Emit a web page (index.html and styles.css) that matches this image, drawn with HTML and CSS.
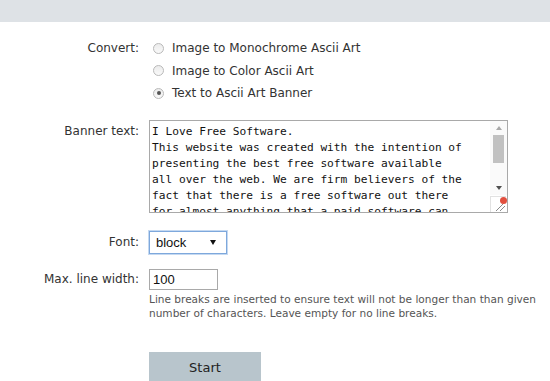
FILE: index.html
```html
<!DOCTYPE html>
<html>
<head>
<meta charset="utf-8">
<link rel="stylesheet" href="styles.css">
</head>
<body>
<div class="topbar"></div>
<form class="form">
  <div class="row row-convert">
    <div class="label">Convert:</div>
    <div class="control radios">
      <label class="radio"><input type="radio" name="mode"><span>Image to Monochrome Ascii Art</span></label>
      <label class="radio"><input type="radio" name="mode"><span>Image to Color Ascii Art</span></label>
      <label class="radio"><input type="radio" name="mode" checked><span>Text to Ascii Art Banner</span></label>
    </div>
  </div>
  <div class="row row-text">
    <div class="label label-text">Banner text:</div>
    <div class="control textwrap">
      <textarea class="banner" spellcheck="false">I Love Free Software.
This website was created with the intention of
presenting the best free software available
all over the web. We are firm believers of the
fact that there is a free software out there
for almost anything that a paid software can
do. So enjoy the free software and share it.</textarea>
      <div class="vscroll">
        <span class="sb-btn sb-up"></span>
        <span class="sb-thumb"></span>
        <span class="sb-space"></span>
        <span class="sb-btn sb-down"></span>
      </div>
      <div class="corner">
        <svg width="15" height="15" viewBox="0 0 15 15"><path d="M5 14 L14 5 M9 14 L14 9" stroke="#8a8a8a" stroke-width="1" fill="none"/></svg>
      </div>
      <span class="dot"></span>
    </div>
  </div>
  <div class="row row-font">
    <div class="label label-font">Font:</div>
    <div class="control">
      <div class="select"><span>block</span><span class="arrow"></span></div>
    </div>
  </div>
  <div class="row row-width">
    <div class="label label-width">Max. line width:</div>
    <div class="control">
      <input class="num" type="text" value="100">
      <p class="help">Line breaks are inserted to ensure text will not be longer than than given number of characters. Leave empty for no line breaks.</p>
    </div>
  </div>
  <div class="row row-start">
    <div class="label"></div>
    <div class="control">
      <button type="button" class="start">Start</button>
    </div>
  </div>
</form>
</body>
</html>
```

FILE: styles.css
```css
html, body {
  margin: 0;
  padding: 0;
  background: #fff;
}
body {
  font-family: "DejaVu Sans", Verdana, sans-serif;
  font-size: 12px;
  color: #333;
  overflow: hidden;
}
.topbar {
  height: 22px;
  background: #dee2e6;
}
.form {
  margin: 0;
  padding-top: 15px;
}
.row {
  display: flex;
  align-items: flex-start;
}
.label {
  flex: none;
  text-align: right;
  padding-right: 10px;
  box-sizing: border-box;
  width: 149px;
  line-height: 22px;
  color: #333;
}
.control {
  flex: 1;
  min-width: 0;
}
.radios {
  display: flex;
  flex-direction: column;
}
.radio {
  display: flex;
  align-items: center;
  height: 22.5px;
  margin-left: 4px;
}
.radio input {
  -webkit-appearance: none;
  appearance: none;
  width: 11px;
  height: 11px;
  margin: 0 8px 0 0;
  border-radius: 50%;
  border: 1px solid #b9b9b9;
  background: linear-gradient(#ececec, #f9f9f9);
  box-sizing: border-box;
  position: relative;
}
.radio input:checked::after {
  content: "";
  position: absolute;
  left: 2.5px;
  top: 2.5px;
  width: 4px;
  height: 4px;
  border-radius: 50%;
  background: #555;
}
.row-text {
  margin-top: 15px;
}
.label-text {
  line-height: 20px;
  padding-top: 1px;
}
.textwrap {
  position: relative;
}
.banner {
  display: block;
  width: 359px;
  height: 93px;
  box-sizing: border-box;
  margin: 0;
  border: 1px solid #a9a9a9;
  padding: 3px 18px 0 2px;
  font-family: "DejaVu Sans Mono", "Liberation Mono", monospace;
  font-size: 11.2px;
  line-height: 16px;
  color: #111;
  resize: none;
  overflow: hidden;
  white-space: pre;
}
.vscroll {
  position: absolute;
  left: 341px;
  top: 1px;
  width: 17px;
  height: 74px;
  background: #fafafa;
  display: flex;
  flex-direction: column;
  align-items: center;
}
.sb-btn {
  flex: none;
  width: 17px;
  height: 14px;
  display: flex;
  align-items: center;
  justify-content: center;
}
.sb-up::before {
  content: "";
  border-left: 3px solid transparent;
  border-right: 3px solid transparent;
  border-bottom: 4px solid #a8a8a8;
}
.sb-down::before {
  content: "";
  border-left: 3px solid transparent;
  border-right: 3px solid transparent;
  border-top: 4px solid #505050;
}
.sb-thumb {
  flex: none;
  width: 11px;
  height: 28px;
  background: #c1c1c1;
}
.sb-space {
  flex: 1;
}
.corner {
  position: absolute;
  left: 341px;
  top: 76px;
  width: 16px;
  height: 16px;
  box-sizing: border-box;
  border-top: 1px solid #e2e2e2;
  border-left: 1px solid #e2e2e2;
  background: #fff;
}
.corner svg {
  display: block;
}
.dot {
  position: absolute;
  left: 351px;
  top: 77px;
  width: 7px;
  height: 7px;
  border-radius: 50%;
  background: #e2503f;
}
.row-font {
  margin-top: 18px;
}
.label-font {
  line-height: 23px;
}
.select {
  width: 78px;
  height: 23px;
  box-sizing: border-box;
  border: 1px solid #7ea8dc;
  box-shadow: 0 0 0 1px #c5d9f1;
  display: flex;
  align-items: center;
  justify-content: space-between;
  padding: 0 10px 0 6px;
  font-family: "Liberation Sans", Arial, sans-serif;
  font-size: 13px;
  color: #111;
  background: #fff;
}
.arrow {
  width: 0;
  height: 0;
  border-left: 3.5px solid transparent;
  border-right: 3.5px solid transparent;
  border-top: 5px solid #111;
}
.row-width {
  margin-top: 15px;
}
.label-width {
  line-height: 21px;
}
.num {
  display: block;
  width: 69px;
  height: 21px;
  box-sizing: border-box;
  margin: 0;
  border: 1px solid #a9a9a9;
  padding: 0 3px;
  font-family: "Liberation Sans", Arial, sans-serif;
  font-size: 13px;
  color: #111;
}
.help {
  margin: 2px 0 0 0;
  font-size: 10.55px;
  line-height: 14px;
  color: #555;
}
.row-start {
  margin-top: 32px;
}
.start {
  width: 112px;
  height: 32px;
  border: none;
  margin: 0;
  background: #b8c5cc;
  font-family: "DejaVu Sans", Verdana, sans-serif;
  font-size: 13px;
  color: #222;
  padding: 0;
}
```
